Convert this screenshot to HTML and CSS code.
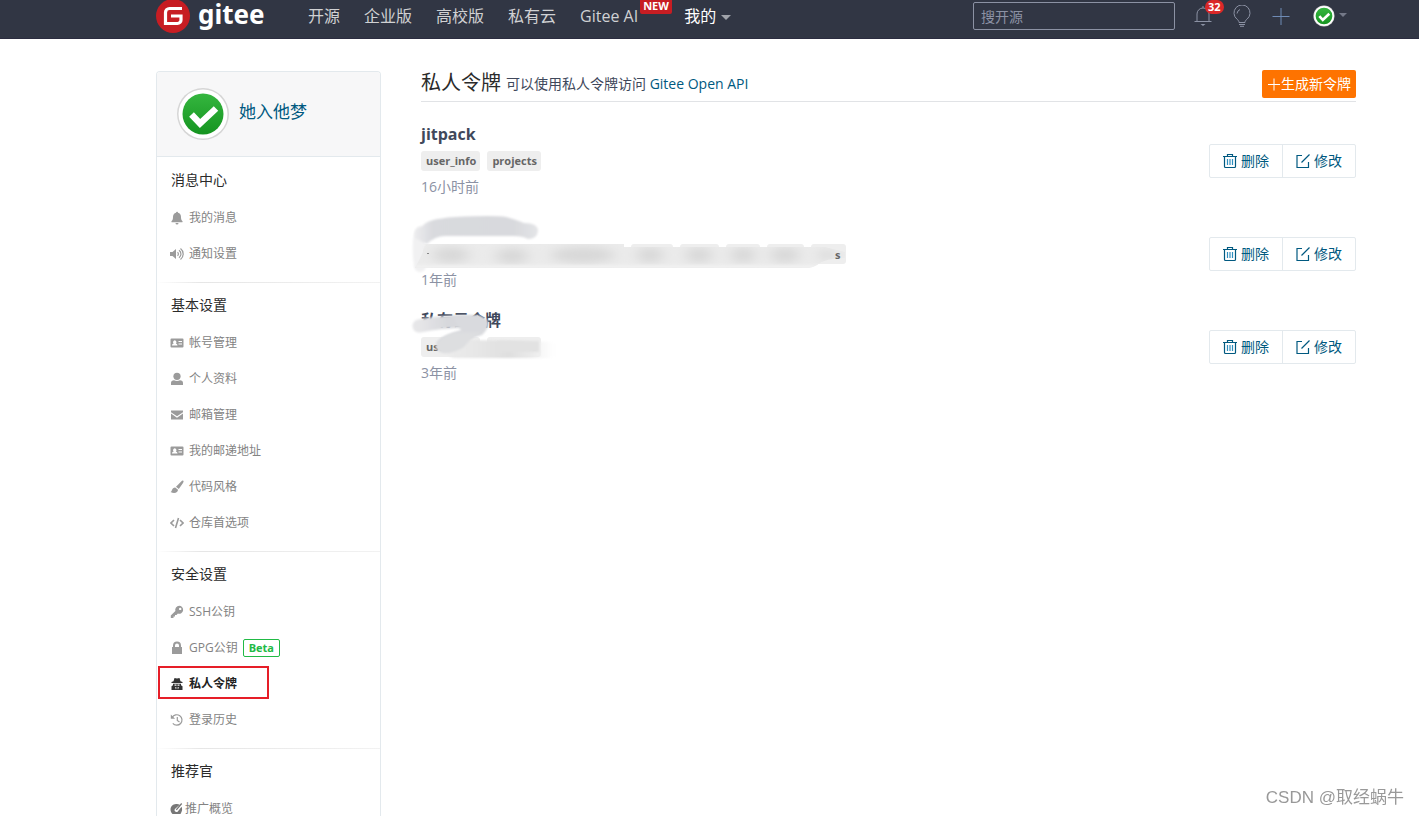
FILE: index.html
```html
<!DOCTYPE html>
<html lang="zh-CN">
<head>
<meta charset="utf-8">
<title>私人令牌 - Gitee</title>
<link rel="stylesheet" href="styles.css">
</head>
<body>
<svg class="defs" aria-hidden="true">
  <defs>
    <linearGradient id="green" x1="0" y1="0" x2="0" y2="1"><stop offset="0" stop-color="#35b63f"/><stop offset="1" stop-color="#159420"/></linearGradient>
    <symbol id="check" viewBox="0 0 54 54">
      <circle cx="27" cy="27" r="26" fill="#d6d6d6"/><circle cx="27" cy="27" r="24.5" fill="#fff"/>
      <circle cx="27" cy="27" r="20.5" fill="url(#green)"/>
      <path d="M15.500 27.500l8.500 9L40 21.500" fill="none" stroke="#fff" stroke-width="6.500"/>
    </symbol>
    <symbol id="card" viewBox="0 0 14 14"><path fill-rule="evenodd" d="M1.500 2.500h11a1 1 0 0 1 1 1v7a1 1 0 0 1-1 1h-11a1 1 0 0 1-1-1v-7a1 1 0 0 1 1-1zM2 9.500h5.500c0-1.500-.9-2-1.700-2.100a1.700 1.700 0 1 0-2.100 0C2.900 7.600 2 8 2 9.500zM8.500 5v1H12V5zm0 2.500v1H12v-1z"/></symbol>
    <symbol id="trash" viewBox="0 0 16 16"><path d="M1 3.500h14M5.500 3V1.500h5V3M2.500 4v9.500q0 1 1 1h9q1 0 1-1V4" fill="none" stroke="currentColor" stroke-width="1.200"/><path d="M5.500 6v6M8 6v6M10.500 6v6" fill="none" stroke="#2f8fc0" stroke-width="1.200"/></symbol>
    <symbol id="edit" viewBox="0 0 16 16"><path d="M7 2.500H2v12h11.500V9M6.500 9.500L14.500 1.500" fill="none" stroke="currentColor" stroke-width="1.200"/></symbol>
  </defs>
</svg>

<header class="topbar">
  <a class="logo" href="#" aria-label="gitee">
    <svg class="logo-mark" viewBox="0 0 34 34"><circle cx="17" cy="17" r="17" fill="#c71d23"/><path d="M26 9.500H13.500a4 4 0 0 0-4 4V24.500H21.500a3.500 3.500 0 0 0 3.500-3.500V17H15" fill="none" stroke="#fff" stroke-width="3.200"/></svg>
    <span class="logo-text">gitee</span>
  </a>
  <nav class="nav">
    <a href="#">开源</a>
    <a href="#">企业版</a>
    <a href="#">高校版</a>
    <a href="#">私有云</a>
    <a class="ai" href="#">Gitee AI<span class="new">NEW</span></a>
    <a class="mine" href="#">我的<i class="caret"></i></a>
  </nav>
  <input class="search" type="text" placeholder="搜开源" aria-label="搜开源">
  <div class="tools">
    <button class="tool" aria-label="通知"><svg viewBox="0 0 20 22"><path d="M1.500 16.500H18.500M4 16V9a6 6 0 0 1 12 0v7M10 3V1" /><path d="M7.500 19h5l-2.500 2z" class="solid"/></svg><span class="count">32</span></button>
    <button class="tool" aria-label="提示"><svg viewBox="0 0 20 22"><path d="M7 17.500c0-1.500-.8-2.300-2-3.300a8 8 0 1 1 10 0c-1.200 1-2 1.800-2 3.300zM7 19.500h6M8 21.300h4M5 8.500a5 5 0 0 1 3-4"/></svg></button>
    <button class="tool" aria-label="新建"><svg class="plus" viewBox="0 0 20 22"><path d="M1.500 11.500h17M10 3v17"/></svg></button>
    <button class="account" aria-label="账户"><svg viewBox="0 0 54 54"><use href="#check"/></svg><i class="caret"></i></button>
  </div>
</header>

<div class="page">
  <aside class="sidebar">
    <div class="profile">
      <svg class="avatar" viewBox="0 0 54 54"><use href="#check"/></svg>
      <a href="#">她入他梦</a>
    </div>
    <section class="group">
      <h2>消息中心</h2>
      <a href="#"><svg viewBox="0 0 14 14"><path d="M7 .8c.6 0 1 .4 1 .9 2 .5 3 2.100 3 4.300 0 2.500.6 3.300 1.500 4.200.3.500 0 1.100-.6 1.100H2.100c-.6 0-.9-.6-.6-1.100C2.400 9.300 3 8.500 3 6c0-2.200 1-3.800 3-4.300 0-.5.400-.9 1-.9zM5.500 12h3a1.500 1.500 0 0 1-3 0z"/></svg>我的消息</a>
      <a href="#"><svg viewBox="0 0 14 14"><path d="M0 5h2.500L6 2v10L2.500 9H0z"/><path class="line" d="M7.500 5.200a2.300 2.300 0 0 1 0 3.600M9 3.200a4.700 4.700 0 0 1 0 7.600M10.500 1.500a7 7 0 0 1 0 11"/></svg>通知设置</a>
    </section>
    <section class="group">
      <h2>基本设置</h2>
      <a href="#"><svg viewBox="0 0 14 14"><use href="#card"/></svg>帐号管理</a>
      <a href="#"><svg viewBox="0 0 14 14"><circle cx="7" cy="4.300" r="3.600"/><path d="M1 13v-2c0-1.800 1.200-2.700 3-2.800 1.900 1 4.100 1 6 0 1.800.1 3 1 3 2.800v2z"/></svg>个人资料</a>
      <a href="#"><svg viewBox="0 0 14 14"><path d="M1 2.500h12v1.700L7 8.300 1 4.200zM1 5.600l6 4.100 6-4.100v6H1z"/></svg>邮箱管理</a>
      <a href="#"><svg viewBox="0 0 14 14"><use href="#card"/></svg>我的邮递地址</a>
      <a href="#"><svg viewBox="0 0 14 14"><path d="M13.300.8c.6.6.2 1.400-.3 2.200L8.800 9 6 6.700l5.200-5.200c.7-.7 1.500-1.200 2.100-.7zM5.200 7.500l2.800 2.300c.1 2.700-3.500 4.200-7.500 2.200C2.600 11.500 1.500 7.500 5.200 7.500z"/></svg>代码风格</a>
      <a href="#"><svg viewBox="0 0 14 14"><path class="line bold" d="M4 4L1 7l3 3M10 4l3 3-3 3M8.500 2l-3 10"/></svg>仓库首选项</a>
    </section>
    <section class="group">
      <h2>安全设置</h2>
      <a href="#"><svg viewBox="0 0 14 14"><path fill-rule="evenodd" d="M9.200.8a4 4 0 1 1-1.300 7.800L6.500 10H5v1.500H3.500V13H.8v-2.500L5.400 6A4 4 0 0 1 9.200.8zM10.200 2.700a1.200 1.200 0 1 0 0 2.400 1.200 1.200 0 0 0 0-2.400z"/></svg>SSH公钥</a>
      <a href="#"><svg viewBox="0 0 14 14"><path fill-rule="evenodd" d="M3 6V4.500a4 4 0 0 1 8 0V6h1v7H2V6zm2 0h4V4.500a2 2 0 0 0-4 0z"/></svg>GPG公钥<span class="beta">Beta</span></a>
      <a class="active" href="#"><svg viewBox="0 0 14 14"><path fill-rule="evenodd" d="M4.500 1L7 1.600 9.500 1l1 3.200 2 .8v1H1.500V5l2-.8zM3 6.700h8v1.500l1.500 1V13h-11V9.200l1.500-1zM4.500 7.500v1.300h2V7.500zm3 0v1.300h2V7.500zM5 10l1 2.500L6.600 10.500zm4 0l-1.600.5.6 2z"/></svg>私人令牌</a>
      <a href="#"><svg viewBox="0 0 14 14"><path class="line" d="M2.200 4.500a5.200 5.200 0 1 1 .6 5.800M7.300 4v3.500L9.500 9"/><path d="M.8 1.500v4.300h4.300z"/></svg>登录历史</a>
    </section>
    <section class="group">
      <h2>推荐官</h2>
      <a class="tight" href="#"><svg viewBox="0 0 14 14"><path class="dark" fill-rule="evenodd" d="M6 2c1.600-.2 2.700.1 3.700.8L5.500 6.500a1.900 1.900 0 1 0 2.700 2.400l3.300-4.200c1.200 2.600.5 5-1 7.300H2.500C-1.500 8 1 2.300 6 2zm5.200-1l1 1-5.400 6.300-1-.9z"/></svg>推广概览</a>
    </section>
  </aside>

  <main class="main">
    <div class="heading">
      <h1>私人令牌</h1>
      <p>可以使用私人令牌访问 <a href="#">Gitee Open API</a></p>
      <button class="create"><svg viewBox="0 0 14 14"><path d="M1 7.500h12M7 1.500v12" fill="none" stroke="#fff"/></svg>生成新令牌</button>
    </div>
    <div class="tokens">
      <article class="token">
        <div class="info">
          <h3>jitpack</h3>
          <div class="tags"><span>user_info</span><span>projects</span></div>
          <time>16小时前</time>
        </div>
        <div class="actions"><button><svg><use href="#trash"/></svg>删除</button><button><svg><use href="#edit"/></svg>修改</button></div>
      </article>
      <article class="token">
        <div class="info">
          <h3></h3>
          <div class="tags"></div>
          <time>1年前</time>
        </div>
        <svg class="smudge" viewBox="0 0 450 93" aria-hidden="true">
          <defs>
            <filter id="soft" filterUnits="userSpaceOnUse" x="0" y="0" width="450" height="93"><feGaussianBlur stdDeviation="0.800"/></filter>
            <filter id="haze" filterUnits="userSpaceOnUse" x="0" y="0" width="450" height="93"><feGaussianBlur stdDeviation="7 4"/></filter>
            <clipPath id="band"><path d="M18 44q0-8 8-8H219v3H420l20 5v6q-20 0-28 7-5 3-9 3H10z"/></clipPath>
            <linearGradient id="stroke1"><stop offset="0" stop-color="#ececee"/><stop offset=".15" stop-color="#d9dade"/><stop offset=".8" stop-color="#d8d9dd"/><stop offset="1" stop-color="#e4e5e7"/></linearGradient>
          </defs>
          <g fill="#eee">
            <rect x="16" y="36" width="203" height="20" rx="3"/><rect x="226" y="36" width="42" height="20" rx="3"/><rect x="275" y="36" width="39" height="20" rx="3"/><rect x="321" y="36" width="34" height="20" rx="3"/><rect x="362" y="36" width="37" height="20" rx="3"/><rect x="406" y="36" width="35" height="20" rx="3"/>
          </g>
          <path d="M16 24Q12 34 15 58" fill="none" stroke="#f1f1f2" stroke-width="12" stroke-linecap="round" filter="url(#soft)"/>
          <path d="M17 19Q20 11 50 9Q90 7 101 9Q112 12 119 15Q133 15 133 23Q132 31 123 31Q118 28 108 28H40Q30 28 22 36L10 30Q8 20 17 19z" fill="url(#stroke1)" filter="url(#soft)"/>
          <g clip-path="url(#band)">
            <path d="M10 36H440V60H10z" fill="#ebebeb"/>
            <g fill="#d8d8d8" filter="url(#haze)"><ellipse cx="46" cy="47" rx="18" ry="8"/><ellipse cx="107" cy="48" rx="16" ry="8"/><ellipse cx="178" cy="47" rx="32" ry="8"/><ellipse cx="245" cy="47" rx="13" ry="8"/><ellipse cx="294" cy="47" rx="13" ry="8"/><ellipse cx="338" cy="47" rx="12" ry="8"/><ellipse cx="380" cy="47" rx="14" ry="8"/><ellipse cx="422" cy="47" rx="8" ry="5"/></g>
            <path d="M10 57H440V60H10z" fill="#f1f1f1" filter="url(#soft)"/>
          </g>
          <path d="M22 45.500h2" stroke="#888"/>
          <text x="430" y="51">s</text>
        </svg>
        <div class="actions"><button><svg><use href="#trash"/></svg>删除</button><button><svg><use href="#edit"/></svg>修改</button></div>
      </article>
      <article class="token">
        <div class="info">
          <h3>私有云令牌</h3>
          <div class="tags"><span>user_info</span><span>projects</span></div>
          <time>3年前</time>
        </div>
        <svg class="smudge" viewBox="0 0 450 93" aria-hidden="true">
          <defs>
            <linearGradient id="fade"><stop offset="0" stop-color="#ededed"/><stop offset=".3" stop-color="#e7e7e7"/><stop offset=".58" stop-color="#dfdfdf"/><stop offset=".75" stop-color="#e9e9e9"/><stop offset="1" stop-color="#fff" stop-opacity="0"/></linearGradient>
            <linearGradient id="stroke2"><stop offset="0" stop-color="#e6e6e8"/><stop offset=".5" stop-color="#d7d8dc"/><stop offset="1" stop-color="#d9dbdf"/></linearGradient>
          </defs>
          <path d="M14 25Q45 19 72 21" fill="none" stroke="url(#stroke2)" stroke-width="13" stroke-linecap="round" filter="url(#soft)"/>
          <path d="M48 16Q72 13 80 17Q88 23 77 34L40 44L31 43Q34 35 56 29z" fill="#d9dade" filter="url(#soft)"/>
          <path d="M33 44L66 39L155 41V57H52Q45 57 42 53Q35 54 33 44z" fill="url(#fade)" filter="url(#soft)"/>
          <path d="M92 40H134V51H92z" fill="#e2e2e2" filter="url(#soft)"/>
          <path d="M31 46Q32 37 49 32L76 31Q66 37 59 46Q48 53 38 52Q31 50 31 46z" fill="#dddee0" filter="url(#soft)"/>
        </svg>
        <div class="actions"><button><svg><use href="#trash"/></svg>删除</button><button><svg><use href="#edit"/></svg>修改</button></div>
      </article>
    </div>
  </main>
</div>
<div class="watermark">CSDN @取经蜗牛</div>
</body>
</html>
```

FILE: styles.css
```css
* { box-sizing: border-box; }
body {
  margin: 0;
  height: 100vh;
  overflow: hidden;
  display: flex;
  flex-direction: column;
  background: #fff;
  color: #40485b;
  font: 14px/20px "Open Sans", "Noto Sans CJK SC", sans-serif;
}
a { color: #005980; text-decoration: none; }
button { font: inherit; cursor: pointer; padding: 0; border: 0; background: none; }
h1, h2, h3, p { margin: 0; font-weight: 400; }
.defs { position: absolute; width: 0; height: 0; }

.topbar {
  flex: none;
  height: 39px;
  display: flex;
  align-items: flex-start;
  padding: 0 63px 0 156px;
  background: #313644;
  border-bottom: 1px solid #2b2c40;
}
.logo { display: flex; width: 152px; gap: 8px; }
.logo-mark { width: 34px; height: 34px; margin-top: -1px; }
.logo-text { color: #fff; font: bold 26px/28px "Noto Sans", sans-serif; }
.nav { display: flex; gap: 24px; padding-top: 4px; }
.nav a { color: #d0d1d3; font-size: 16px; line-height: 24px; white-space: nowrap; }
.nav .ai { position: relative; margin-right: 22px; }
.new {
  position: absolute;
  left: 100%;
  top: -6px;
  margin-left: 2px;
  padding: 0 3px;
  border-radius: 2px;
  background: #c71d23;
  color: #fff;
  font: bold 11px/16px "Open Sans", sans-serif;
}
.nav .mine { color: #fff; }
.caret {
  display: inline-block;
  border: 5px solid transparent;
  border-top-color: #a0a3aa;
  border-bottom: 0;
  margin-left: 5px;
  vertical-align: 2px;
}
.search {
  width: 202px;
  height: 28px;
  margin: 2px 0 0 auto;
  padding: 0 7px;
  border: 1px solid #8c92a4;
  border-radius: 2px;
  background: transparent;
  color: #fff;
  font: inherit;
}
.search::placeholder { color: #8c92a4; opacity: 1; }
.tools { display: flex; gap: 19px; padding: 4px 9px 0 18px; }
.tool { position: relative; width: 20px; height: 24px; }
.tool svg { display: block; width: 20px; height: 22px; fill: none; stroke: #8c92a4; }
.tool .solid { fill: #8c92a4; stroke: none; }
.tool .plus { stroke: #6f8bb5; }
.count {
  position: absolute;
  left: 12px;
  top: -4px;
  padding: 0 3px;
  border-radius: 7px;
  background: #db2828;
  color: #fff;
  font: bold 11px/14px "Noto Sans", sans-serif;
}
.account { display: flex; align-items: center; gap: 4px; margin-left: 3px; height: 24px; }
.account svg { width: 22px; height: 22px; }
.account .caret { border-width: 4px 4px 0; margin: 0 0 2px; border-top-color: #747988; }

.page { flex: 1; min-height: 0; display: flex; gap: 40px; padding: 32px 63px 0 156px; }
.sidebar {
  flex: none;
  width: 225px;
  border: 1px solid #e3e9ed;
  border-bottom: 0;
  border-radius: 4px 4px 0 0;
  overflow: hidden;
}
.profile {
  display: flex;
  align-items: center;
  gap: 9px;
  height: 85px;
  padding-left: 19px;
  background: #f7f7f8;
  border-bottom: 1px solid #e3e9ed;
  font-size: 17px;
}
.profile a { padding-bottom: 4px; }
.avatar { width: 54px; height: 54px; }
.group {
  display: flex;
  flex-direction: column;
  align-items: flex-start;
  padding: 4px 0 10px 13px;
  border-bottom: 1px solid;
  border-image: linear-gradient(90deg, #fff, #e6e6e6 20%, #f2f2f2) 1;
}
.group:first-of-type { padding-top: 5px; }
.group h2 { margin: 0 0 2px 1px; font-size: 14px; line-height: 36px; color: #2b2b2b; }
.group a { display: flex; align-items: center; gap: 5px; height: 36px; font-size: 12px; color: #838383; }
.group .tight { gap: 1px; }
.group svg { width: 14px; height: 14px; fill: #9b9b9b; }
.group .dark { fill: #777; }
.group .line { fill: none; stroke: #9b9b9b; stroke-width: 1.2; }
.group .bold { stroke-width: 1.6; }
.beta {
  padding: 0 5px;
  border: 1px solid #21ba45;
  border-radius: 2px;
  color: #21ba45;
  font-weight: 700;
  font-size: 11px;
  line-height: 16px;
}
.group .active {
  height: 33px;
  margin: 0 0 3px -12px;
  padding: 3px 30px 0 10px;
  border: 2px solid #e61e28;
  color: #222;
  font-weight: 700;
}
.group .active svg { fill: #333; }

.main { flex: 1; min-width: 0; }
.heading { display: flex; align-items: center; height: 31px; padding-bottom: 4px; border-bottom: 1px solid #e1e3e6; }
.heading h1 { font-size: 20px; line-height: 24px; padding-bottom: 2px; color: #2b2b2b; margin-right: 5px; }
.create {
  display: flex;
  align-items: center;
  height: 28px;
  margin-left: auto;
  padding: 0 5px;
  border-radius: 2px;
  background: #fe7300;
  color: #fff;
}
.create svg { width: 14px; height: 14px; }
.tokens { padding-top: 13px; }
.token { position: relative; display: flex; justify-content: space-between; align-items: center; }
.info { padding: 8px 0 11px; }
.info h3 { height: 22px; font-size: 16px; line-height: 22px; font-weight: 700; }
.tags { display: flex; gap: 7px; height: 20px; margin: 6px 0; }
.tags span { padding: 0 4px 0 5px; border-radius: 3px; background: #eee; color: #666; font: bold 11px/20px "Open Sans", sans-serif; }
.info time { display: block; color: #8c92a4; }
.actions { display: flex; margin-bottom: 2px; border: 1px solid #e3e9ed; border-radius: 2px; }
.actions button { display: flex; align-items: center; gap: 3px; height: 32px; padding: 0 13px 0 12px; color: #005980; }
.actions button + button { border-left: 1px solid #e3e9ed; }
.actions svg { width: 16px; height: 16px; }
.smudge { position: absolute; left: -16px; top: 0; width: 450px; height: 93px; }
.smudge text { font: bold 11px "Open Sans", sans-serif; fill: #666; }
.watermark { position: fixed; right: 15px; bottom: 6px; color: #999; font: 17px/24px "Liberation Sans", "Noto Sans CJK SC", sans-serif; }
```
